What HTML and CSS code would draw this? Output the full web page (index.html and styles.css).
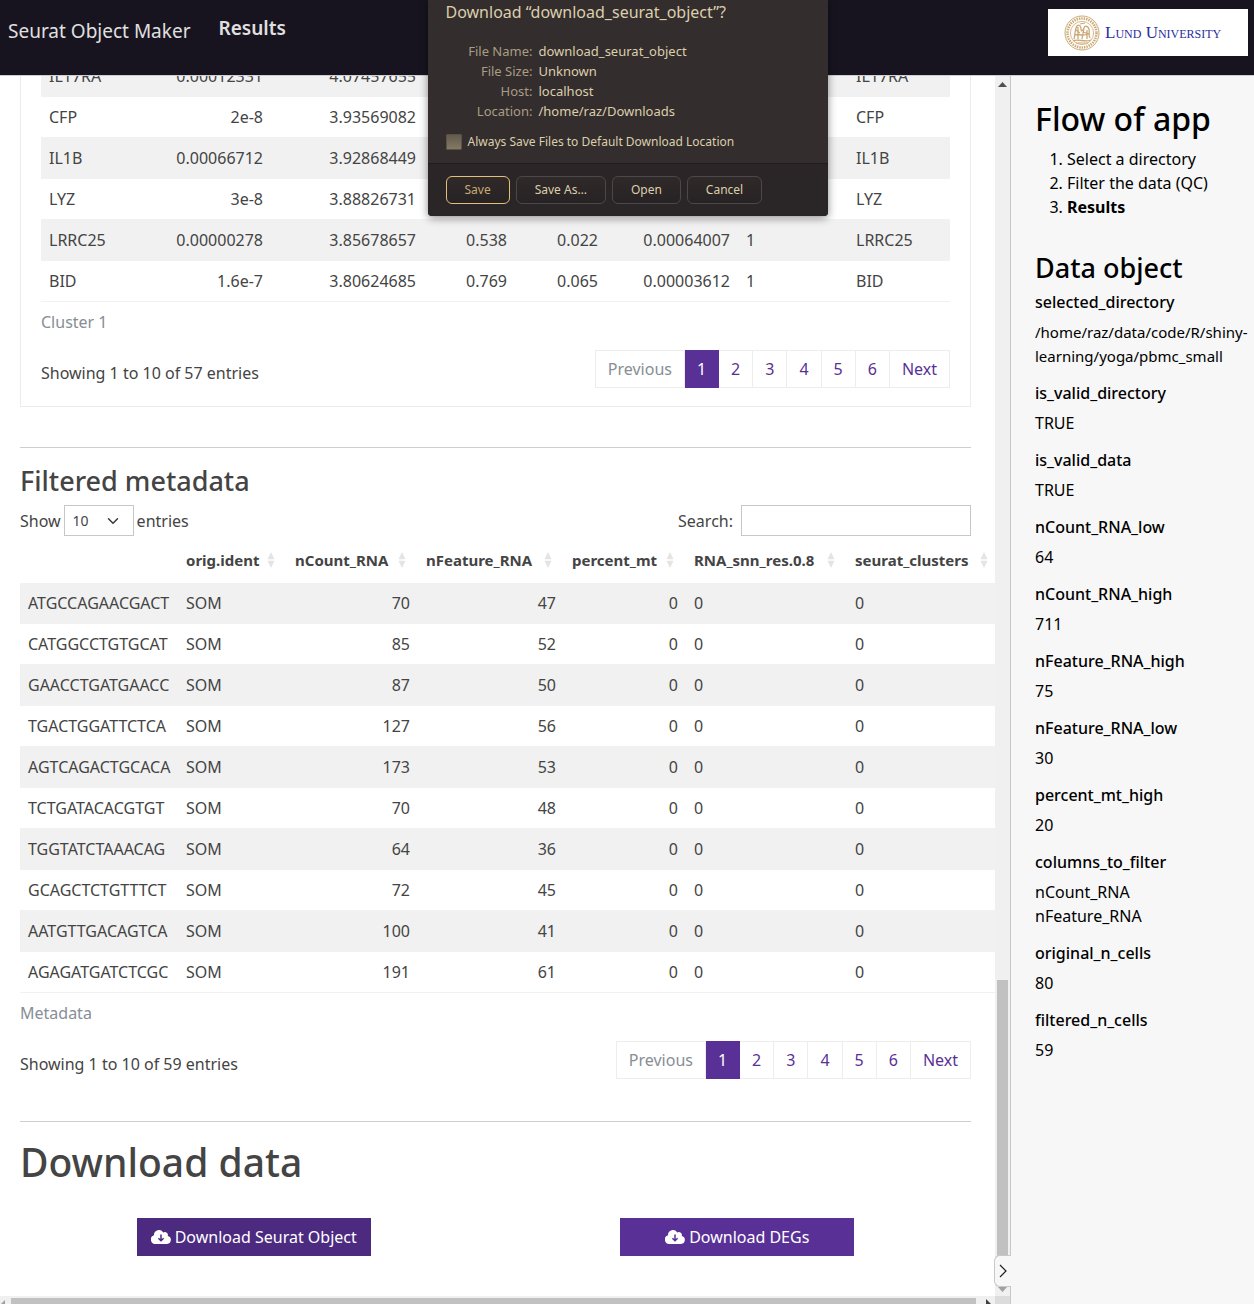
FILE: index.html
```html
<!DOCTYPE html>
<html lang="en">
<head>
<meta charset="utf-8">
<title>Seurat Object Maker</title>
<link rel="stylesheet" href="styles.css">
</head>
<body>
<svg class="defs" aria-hidden="true">
  <symbol id="sort" viewBox="0 0 8 16"><path d="M4 0 7.5 7.3h-7zM4 16 .5 8.7h7z" fill="#e4e4e4"/></symbol>
  <symbol id="cloud" viewBox="0 0 20 14"><path d="M16.7 6.1a3 3 0 0 0-4.4-3.6A5 5 0 0 0 3 5.2 4.5 4.5 0 0 0 4.5 14H16a4 4 0 0 0 .7-7.9z" fill="#fff"/><path d="M10 4.600v6M7.400 8.200 10 10.800l2.600-2.600" fill="none" stroke="currentColor" stroke-width="1.500"/></symbol>
</svg>
<header class="navbar">
  <a class="brand" href="#">Seurat Object Maker</a>
  <h1 class="page-title">Results</h1>
  <a class="logo" href="#">
    <svg class="seal" viewBox="0 0 36 36" aria-hidden="true" fill="none" stroke="#cba873">
      <circle cx="18" cy="18" r="17" stroke-width="1"/>
      <circle cx="18" cy="18" r="14.500" stroke-width="2.600" stroke-dasharray="1.400 1"/>
      <circle cx="18" cy="18" r="11.600" stroke-width=".8"/>
      <path d="M10 24c2-6 0-9 3-13 2-2 4 0 4 3s2 2 3-1 4-2 5 1-1 6 1 9M11 20c4-2 6 2 13-1M9 26c5-3 12 2 18-1M14 12v12M20 13l-2 11M23 15v9M12 15l4 3M19 17l6 2" stroke-width="1.300"/>
      <path d="M12 28h12M16 9l5-1"/>
    </svg>
    <span class="logo-text">Lund University</span>
  </a>
</header>

<div class="layout">
  <main class="main">
    <div class="content">
      <section class="card">
        <table class="table">
          <caption>Cluster 1</caption>
          <colgroup><col class="w-100"><col class="w-130"><col class="w-153"><col class="w-91"><col class="w-91"><col class="w-132"><col class="w-110"><col class="w-102"></colgroup>
          <tbody>
            <tr><td>IL17RA</td><td class="num">0.00012331</td><td class="num">4.07457655</td><td></td><td></td><td></td><td></td><td>IL17RA</td></tr>
            <tr><td>CFP</td><td class="num">2e-8</td><td class="num">3.93569082</td><td></td><td></td><td></td><td></td><td>CFP</td></tr>
            <tr><td>IL1B</td><td class="num">0.00066712</td><td class="num">3.92868449</td><td></td><td></td><td></td><td></td><td>IL1B</td></tr>
            <tr><td>LYZ</td><td class="num">3e-8</td><td class="num">3.88826731</td><td></td><td></td><td></td><td></td><td>LYZ</td></tr>
            <tr><td>LRRC25</td><td class="num">0.00000278</td><td class="num">3.85678657</td><td class="num">0.538</td><td class="num">0.022</td><td class="num">0.00064007</td><td>1</td><td>LRRC25</td></tr>
            <tr><td>BID</td><td class="num">1.6e-7</td><td class="num">3.80624685</td><td class="num">0.769</td><td class="num">0.065</td><td class="num">0.00003612</td><td>1</td><td>BID</td></tr>
          </tbody>
        </table>
        <div class="table-footer">
          <p class="info">Showing 1 to 10 of 57 entries</p>
          <nav class="pagination" aria-label="Cluster 1 pages">
            <a class="page disabled" href="#">Previous</a><a class="page active" href="#">1</a><a class="page" href="#">2</a><a class="page" href="#">3</a><a class="page" href="#">4</a><a class="page" href="#">5</a><a class="page" href="#">6</a><a class="page" href="#">Next</a>
          </nav>
        </div>
      </section>

      <section class="section">
        <h2 class="section-title">Filtered metadata</h2>
        <div class="table-tools">
          <label class="length">Show
            <select class="select"><option>10</option><option>25</option><option>50</option></select>
            entries</label>
          <label class="search">Search: <input class="input" type="search"></label>
        </div>
        <div class="table-scroll">
        <table class="table metadata">
          <caption>Metadata</caption>
          <colgroup><col class="w-158"><col class="w-109"><col class="w-131"><col class="w-146"><col class="w-122"><col class="w-161"><col class="w-153"></colgroup>
          <thead>
            <tr>
              <th></th>
              <th><span class="head">orig.ident<svg><use href="#sort"/></svg></span></th>
              <th><span class="head">nCount_RNA<svg><use href="#sort"/></svg></span></th>
              <th><span class="head">nFeature_RNA<svg><use href="#sort"/></svg></span></th>
              <th><span class="head">percent_mt<svg><use href="#sort"/></svg></span></th>
              <th><span class="head">RNA_snn_res.0.8<svg><use href="#sort"/></svg></span></th>
              <th><span class="head">seurat_clusters<svg><use href="#sort"/></svg></span></th>
            </tr>
          </thead>
          <tbody>
            <tr><td>ATGCCAGAACGACT</td><td>SOM</td><td class="num">70</td><td class="num">47</td><td class="num">0</td><td>0</td><td>0</td></tr>
            <tr><td>CATGGCCTGTGCAT</td><td>SOM</td><td class="num">85</td><td class="num">52</td><td class="num">0</td><td>0</td><td>0</td></tr>
            <tr><td>GAACCTGATGAACC</td><td>SOM</td><td class="num">87</td><td class="num">50</td><td class="num">0</td><td>0</td><td>0</td></tr>
            <tr><td>TGACTGGATTCTCA</td><td>SOM</td><td class="num">127</td><td class="num">56</td><td class="num">0</td><td>0</td><td>0</td></tr>
            <tr><td>AGTCAGACTGCACA</td><td>SOM</td><td class="num">173</td><td class="num">53</td><td class="num">0</td><td>0</td><td>0</td></tr>
            <tr><td>TCTGATACACGTGT</td><td>SOM</td><td class="num">70</td><td class="num">48</td><td class="num">0</td><td>0</td><td>0</td></tr>
            <tr><td>TGGTATCTAAACAG</td><td>SOM</td><td class="num">64</td><td class="num">36</td><td class="num">0</td><td>0</td><td>0</td></tr>
            <tr><td>GCAGCTCTGTTTCT</td><td>SOM</td><td class="num">72</td><td class="num">45</td><td class="num">0</td><td>0</td><td>0</td></tr>
            <tr><td>AATGTTGACAGTCA</td><td>SOM</td><td class="num">100</td><td class="num">41</td><td class="num">0</td><td>0</td><td>0</td></tr>
            <tr><td>AGAGATGATCTCGC</td><td>SOM</td><td class="num">191</td><td class="num">61</td><td class="num">0</td><td>0</td><td>0</td></tr>
          </tbody>
        </table>
        </div>
        <div class="table-footer">
          <p class="info">Showing 1 to 10 of 59 entries</p>
          <nav class="pagination" aria-label="Metadata pages">
            <a class="page disabled" href="#">Previous</a><a class="page active" href="#">1</a><a class="page" href="#">2</a><a class="page" href="#">3</a><a class="page" href="#">4</a><a class="page" href="#">5</a><a class="page" href="#">6</a><a class="page" href="#">Next</a>
          </nav>
        </div>
      </section>

      <section class="section">
        <h2 class="download-title">Download data</h2>
        <div class="downloads">
          <button class="btn btn-hover" type="button"><svg><use href="#cloud"/></svg><span>Download Seurat Object</span></button>
          <button class="btn" type="button"><svg><use href="#cloud"/></svg><span>Download DEGs</span></button>
        </div>
      </section>
    </div>
    <div class="vbar" aria-hidden="true">
      <svg class="arrow" viewBox="0 0 15 16"><path d="M3 11h9L7.500 6z" fill="#505050"/></svg>
      <div class="vbar-space"></div>
      <div class="vbar-thumb"></div>
      <svg class="arrow" viewBox="0 0 15 16"><path d="M3 7h9l-4.500 5z" fill="#a0a0a0"/></svg>
    </div>
    <div class="hbar" aria-hidden="true">
      <svg viewBox="0 0 11 8"><path d="M5 4v4H1z" fill="#a0a0a0"/></svg>
      <div class="hbar-thumb"></div>
      <svg class="hbar-next" viewBox="0 0 19 8"><path d="M10 3v5h5z" fill="#404040"/></svg>
    </div>
    <div class="corner" aria-hidden="true"></div>
  </main>

  <aside class="sidebar">
    <h2 class="side-title">Flow of app</h2>
    <ol class="steps">
      <li>Select a directory</li>
      <li>Filter the data (QC)</li>
      <li><strong>Results</strong></li>
    </ol>
    <h3 class="section-title">Data object</h3>
    <dl class="facts">
      <dt>selected_directory</dt><dd class="path">/home/raz/data/code/R/shiny-<br>learning/yoga/pbmc_small</dd>
      <dt>is_valid_directory</dt><dd>TRUE</dd>
      <dt>is_valid_data</dt><dd>TRUE</dd>
      <dt>nCount_RNA_low</dt><dd>64</dd>
      <dt>nCount_RNA_high</dt><dd>711</dd>
      <dt>nFeature_RNA_high</dt><dd>75</dd>
      <dt>nFeature_RNA_low</dt><dd>30</dd>
      <dt>percent_mt_high</dt><dd>20</dd>
      <dt>columns_to_filter</dt><dd>nCount_RNA<br>nFeature_RNA</dd>
      <dt>original_n_cells</dt><dd>80</dd>
      <dt>filtered_n_cells</dt><dd>59</dd>
    </dl>
    <button class="toggle" type="button" aria-label="Toggle sidebar"><svg viewBox="0 0 8 14"><path d="M1 1l6 6-6 6" fill="none" stroke="#222" stroke-width="1.200"/></svg></button>
  </aside>
</div>

<div class="dialog" role="dialog" aria-labelledby="dialog-title">
  <div class="dialog-body">
    <h2 class="dialog-title" id="dialog-title">Download “download_seurat_object”?</h2>
    <dl class="file">
      <dt>File Name:</dt><dd>download_seurat_object</dd>
      <dt>File Size:</dt><dd>Unknown</dd>
      <dt>Host:</dt><dd>localhost</dd>
      <dt>Location:</dt><dd>/home/raz/Downloads</dd>
    </dl>
    <label class="always"><input class="check" type="checkbox">Always Save Files to Default Download Location</label>
  </div>
  <div class="dialog-actions">
    <button class="action primary" type="button">Save</button>
    <button class="action" type="button">Save As…</button>
    <button class="action" type="button">Open</button>
    <button class="action" type="button">Cancel</button>
  </div>
</div>
</body>
</html>
```
FILE: styles.css
```css
* { box-sizing: border-box; }
body {
  margin: 0;
  min-height: 100vh;
  display: flex;
  flex-direction: column;
  background: #fff;
  color: #444;
  font: 16px/24px "Noto Sans", sans-serif;
}
h1, h2, h3, p, dl, dd, ol { margin: 0; }
a { text-decoration: none; }
button, input, select { font: inherit; color: inherit; }
.defs { position: absolute; width: 0; height: 0; }

/* Top bar */
.navbar {
  position: relative;
  z-index: 1;
  display: flex;
  align-items: flex-start;
  gap: 28px;
  height: 76px;
  padding: 9px 6px 0 8px;
  background: #17141f;
  border-bottom: 1px solid #d0cdd6;
  color: #e0e0e0;
}
.brand { color: inherit; font-size: 19px; line-height: 45px; }
.page-title { font-size: 19px; font-weight: 600; line-height: 38px; }
.logo {
  display: flex;
  align-items: center;
  gap: 5px;
  width: 200px;
  height: 47px;
  margin-left: auto;
  padding: 0 16px;
  background: #fff;
  color: #2c2c9c;
}
.seal { width: 36px; height: 36px; }
.logo-text { font: 17px/24px "Liberation Serif", serif; font-variant: small-caps; white-space: nowrap; }

/* Page frame */
.layout { flex: 1; display: grid; grid-template-columns: minmax(0, 1fr) 244px; }
.main {
  display: grid;
  grid-template-columns: minmax(0, 1fr) 15px;
  grid-template-rows: 1fr 8px;
  overflow: hidden;
}
.content { min-width: 0; margin-top: -20px; padding: 0 24px 24px 20px; }
.card { padding: 0 20px 18px; border: 1px solid #ececec; border-top: 0; }

/* Tables */
.table { width: 100%; table-layout: fixed; border-collapse: separate; border-spacing: 0; caption-side: bottom; white-space: nowrap; }
.table caption { padding: 8px 0; text-align: left; color: #868e96; }
.table td { height: 41px; padding: 8px; border-bottom: 1px solid #f1f1f1; line-height: 24px; }
.table tbody tr:nth-child(odd) td { background: #f1f1f1; }
.table th { height: 43px; padding: 8px 8px 11px; text-align: left; font-weight: 700; line-height: 24px; }
.table .num { text-align: right; }
.table-scroll { margin-right: -24px; overflow: hidden; }
.metadata { width: 980px; }
.head { display: flex; align-items: center; justify-content: space-between; font-size: 15px; }
.head svg { flex: none; width: 8px; height: 16px; margin-right: 4px; }
.w-91 { width: 91px; }
.w-100 { width: 100px; }
.w-102 { width: 102px; }
.w-109 { width: 109px; }
.w-110 { width: 110px; }
.w-122 { width: 122px; }
.w-130 { width: 130px; }
.w-131 { width: 131px; }
.w-132 { width: 132px; }
.w-146 { width: 146px; }
.w-153 { width: 153px; }
.w-158 { width: 158px; }
.w-161 { width: 161px; }

.table-footer { display: flex; justify-content: space-between; padding-top: 8px; }
.info { padding-top: 11px; }
.pagination { display: flex; }
.page {
  min-width: 34px;
  height: 38px;
  padding: 6px 12px;
  border: 1px solid #ededed;
  border-left: 0;
  color: #593196;
  text-align: center;
}
.page:first-child { border-left: 1px solid #ededed; }
.page.disabled { color: #868e96; }
.page.active { background: #593196; border-color: #593196; color: #fff; }

.section { margin-top: 40px; padding: 16px 0 2px; border-top: 1px solid #cfcfcf; }
.section-title { font-size: 27px; font-weight: 500; line-height: 34px; }
.table-tools { display: flex; justify-content: space-between; padding: 7px 0 4px; }
.length, .search { display: flex; align-items: center; height: 31px; }
.length { gap: 3px; }
.search { gap: 8px; }
.select {
  width: 70px;
  height: 31px;
  padding: 0 8px;
  appearance: none;
  border: 1px solid #c6c6cd;
  border-radius: 0;
  background: #fff url("data:image/svg+xml,%3Csvg xmlns='http://www.w3.org/2000/svg' viewBox='0 0 16 16'%3E%3Cpath fill='none' stroke='%23343a40' stroke-linecap='round' stroke-linejoin='round' stroke-width='2' d='M2 5l6 6 6-6'/%3E%3C/svg%3E") no-repeat right 14px center / 12px 12px;
  font-size: 14px;
}
.input { width: 230px; height: 31px; border: 1px solid #c6c6cd; background: #fff; appearance: none; }

/* Downloads */
.download-title { font-size: 39px; font-weight: 500; line-height: 48px; }
.downloads { display: grid; grid-template-columns: 1fr 1fr; gap: 16px; padding-top: 32px; justify-items: center; }
.btn {
  display: flex;
  align-items: center;
  justify-content: center;
  gap: 4px;
  width: 234px;
  height: 38px;
  padding: 0;
  border: 0;
  background: #593196;
  color: #593196;
  white-space: nowrap;
}
.btn span { color: #fff; }
.btn svg { width: 20px; height: 14px; }
.btn-hover { background: #4c2a80; color: #4c2a80; }

/* Scroll bars */
.vbar { z-index: 1; display: flex; flex-direction: column; align-items: center; background: #f0f0f0; }
.arrow { width: 15px; height: 16px; flex: none; }
.vbar-space { flex: 888; }
.vbar-thumb { flex: 300; width: 11px; background: #c1c1c1; }
.hbar { display: flex; align-items: flex-end; background: #f0f0f0; }
.hbar svg { width: 11px; height: 8px; flex: none; }
.hbar .hbar-next { width: 19px; }
.hbar-thumb { flex: 1; height: 6px; background: #c1c1c1; }
.corner { background: #dcdcdc; }

/* Sidebar */
.sidebar { position: relative; z-index: 1; padding: 24px 0 24px 24px; border-left: 1px solid #c8c8c8; background: #f7f7f7; color: #000; white-space: nowrap; }
.side-title { font-size: 32px; font-weight: 500; line-height: 38px; }
.steps { margin: 9px 0 32px; padding-left: 32px; }
.facts { padding-top: 5px; }
.facts dt { font-weight: 500; }
.facts dd { padding: 6px 0 13px; }
.facts .path { font-size: 15px; }
.toggle {
  position: absolute;
  left: -17px;
  bottom: 17px;
  display: grid;
  place-items: center;
  width: 17px;
  height: 32px;
  padding: 0;
  border: 1px solid #c8c8c8;
  border-right: 0;
  border-radius: 6px 0 0 6px;
  background: #f7f7f7;
}
.toggle svg { width: 8px; height: 14px; }

/* Download prompt, over the page */
.dialog {
  position: absolute;
  z-index: 2;
  top: 0;
  left: 1px;
  right: 0;
  width: 400px;
  margin: 0 auto;
  border-radius: 0 0 4px 4px;
  background: #332d2e;
  box-shadow: 0 2px 8px rgba(0, 0, 0, .45);
  color: #dccfab;
  font-size: 13px;
  line-height: 20px;
  overflow: hidden;
}
.dialog-body { padding: 0 18px 11px; }
.dialog-title { font-size: 16px; font-weight: 400; line-height: 24px; }
.file { display: grid; grid-template-columns: 87px 1fr; column-gap: 6px; padding-top: 17px; }
.file dt { text-align: right; color: #a99d83; }
.always { display: flex; align-items: center; gap: 6px; padding-top: 11px; font-size: 12px; }
.check { appearance: none; width: 16px; height: 16px; margin: 0; border: 1px solid #5a5148; border-radius: 1px; background: linear-gradient(#635a4d, #847962); }
.dialog-actions { display: flex; gap: 6px; padding: 12px 18px; border-top: 1px solid #211d1e; background: #2a2526; }
.action { height: 28px; padding: 0 18px; border: 1px solid #4c4748; border-radius: 6px; background: linear-gradient(#2f292a, #272223); font-size: 12px; }
.action.primary { border-color: #e3c078; color: #c8ab70; }
```
